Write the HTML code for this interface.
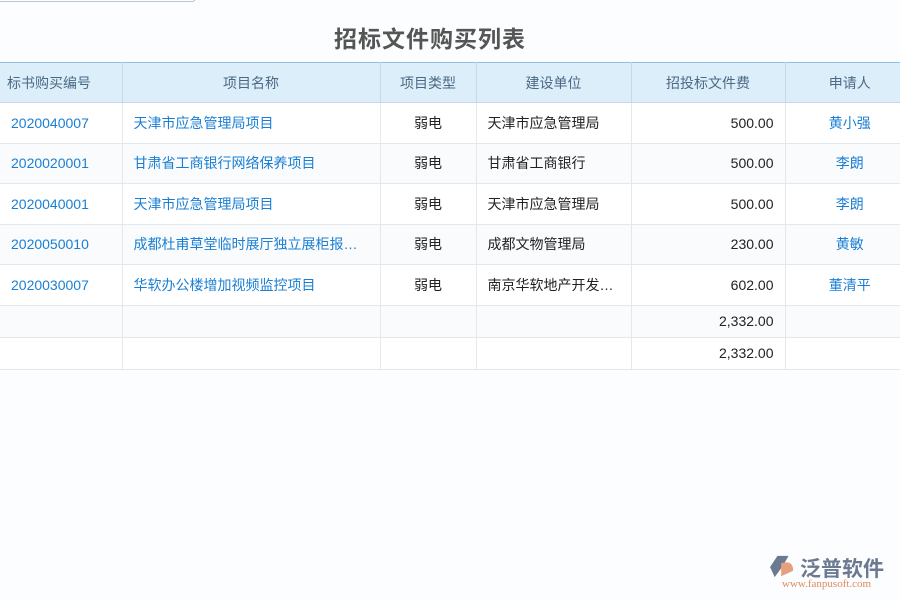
<!DOCTYPE html>
<html><head><meta charset="utf-8"><style>
*{margin:0;padding:0;box-sizing:border-box}
body{width:900px;height:600px;background:#fbfdfe;font-family:"Liberation Sans","Noto Sans CJK SC",sans-serif;position:relative;overflow:hidden}
.topbar{position:absolute;left:-10px;top:-8px;width:206px;height:10px;border:1px solid #b9c7d6;border-radius:4px;background:#fff}
h1{position:absolute;top:20px;left:0;width:860px;text-align:center;font-size:23px;font-weight:bold;color:#555;letter-spacing:1px}
table{position:absolute;top:62px;left:0;width:900px;border-collapse:collapse;font-size:14px;table-layout:fixed}
th{height:40px;background:#ddeefb;color:#4a6a84;font-weight:normal;border-top:1px solid #8cc2ea;border-right:1px solid #c5d9ea;border-bottom:1px solid #c5d9ea}
th:first-child{text-align:left;padding-left:7px}
th:last-child,td:last-child{padding-left:14px;padding-right:0}
td{height:40.5px;border-right:1px solid #e3e8ed;border-bottom:1px solid #e3e8ed;color:#222;white-space:nowrap;overflow:hidden;text-overflow:ellipsis;padding:0 11px}
tr.s td{height:32px}
th:last-child,td:last-child{border-right:none}
.b{color:#1a7fd4}.c{text-align:center}.r{text-align:right}
tbody tr:nth-child(even) td{background:#f9fbfc}
tbody tr td{background:#fff}
.logo{position:absolute;left:770px;top:555px}
.logo .t{position:absolute;left:30px;top:-2px;font-size:21px;color:#6b7a90;white-space:nowrap;font-weight:bold;letter-spacing:0px}
.logo .u{position:absolute;left:12px;top:23px;font-size:11px;color:#e08a5c;white-space:nowrap;font-family:"Liberation Serif",serif}
</style></head><body>
<div class="topbar"></div>
<h1>招标文件购买列表</h1>
<table>
<colgroup><col style="width:122px"><col style="width:258px"><col style="width:96px"><col style="width:155px"><col style="width:154px"><col style="width:115px"></colgroup>
<thead><tr><th>标书购买编号</th><th>项目名称</th><th>项目类型</th><th>建设单位</th><th>招投标文件费</th><th>申请人</th></tr></thead>
<tbody>
<tr><td class="b">2020040007</td><td class="b">天津市应急管理局项目</td><td class="c">弱电</td><td>天津市应急管理局</td><td class="r">500.00</td><td class="c b">黄小强</td></tr>
<tr><td class="b">2020020001</td><td class="b">甘肃省工商银行网络保养项目</td><td class="c">弱电</td><td>甘肃省工商银行</td><td class="r">500.00</td><td class="c b">李朗</td></tr>
<tr><td class="b">2020040001</td><td class="b">天津市应急管理局项目</td><td class="c">弱电</td><td>天津市应急管理局</td><td class="r">500.00</td><td class="c b">李朗</td></tr>
<tr><td class="b">2020050010</td><td class="b">成都杜甫草堂临时展厅独立展柜报价项目</td><td class="c">弱电</td><td>成都文物管理局</td><td class="r">230.00</td><td class="c b">黄敏</td></tr>
<tr><td class="b">2020030007</td><td class="b">华软办公楼增加视频监控项目</td><td class="c">弱电</td><td>南京华软地产开发有限公司</td><td class="r">602.00</td><td class="c b">董清平</td></tr>
<tr class="s"><td></td><td></td><td></td><td></td><td class="r">2,332.00</td><td></td></tr>
<tr class="s"><td></td><td></td><td></td><td></td><td class="r">2,332.00</td><td></td></tr>
</tbody></table>
<div class="logo">
<svg width="26" height="24" viewBox="0 0 28 26" style="position:absolute;left:0;top:0"><polygon points="8,1 20,1 13,13 5,24 0,13" fill="#6b7a90"/><path d="M12,9 Q25,5 25,17 L12,23 Z" fill="#e7a07b"/></svg>
<div class="t">泛普软件</div>
<div class="u">www.fanpusoft.com</div>
</div>
</body></html>
